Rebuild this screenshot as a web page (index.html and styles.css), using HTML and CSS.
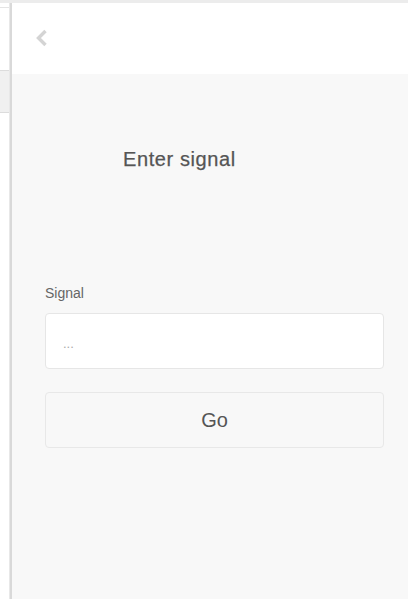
FILE: index.html
```html
<!DOCTYPE html>
<html lang="en">
<head>
<meta charset="utf-8">
<title>Enter signal</title>
<link rel="stylesheet" href="styles.css">
</head>
<body>
<div class="app">
  <aside class="side">
    <div class="side-top"></div>
    <div class="side-a"></div>
    <div class="side-b"></div>
  </aside>
  <div class="divider"></div>
  <main class="panel">
    <header class="header">
      <button class="back" aria-label="Back">
        <svg width="13" height="18" viewBox="0 0 13 18"><path d="M10.5 2 L3.5 9 L10.5 16" fill="none" stroke="#d4d4d4" stroke-width="3.4" stroke-linejoin="miter"/></svg>
      </button>
    </header>
    <section class="content">
      <h1 class="title">Enter signal</h1>
      <label class="label" for="signal">Signal</label>
      <input class="field" id="signal" type="text" placeholder="...">
      <button class="go">Go</button>
    </section>
  </main>
</div>
</body>
</html>
```

FILE: styles.css
```css
* { box-sizing: border-box; }
html, body { margin: 0; padding: 0; }
body {
  font-family: "Liberation Sans", Arial, sans-serif;
  background: #fff;
  width: 408px;
  height: 599px;
  overflow: hidden;
}
.app {
  display: flex;
  height: 599px;
  border-top: 3px solid #ececec;
}
.side {
  width: 9px;
  display: flex;
  flex-direction: column;
}
.side-top { height: 5px; border-bottom: 1px solid #e4e4e4; }
.side-a { height: 63px; border-bottom: 1px solid #dcdcdc; background: #fff; }
.side-b { height: 42px; border-bottom: 1px solid #dcdcdc; background: #f0f0f0; }
.divider {
  width: 3px;
  background: #d9d9d9;
  border-left: 1px solid #e8e8e8;
}
.panel {
  flex: 1;
  margin-top: 1px;
  background: #f8f8f8;
  border-top-left-radius: 4px;
  overflow: hidden;
  display: flex;
  flex-direction: column;
}
.header {
  height: 70px;
  background: #fff;
  padding: 25px 0 0 23px;
}
.back {
  border: 0;
  background: none;
  padding: 0;
  width: 13px;
  height: 18px;
  display: block;
}
.back svg { display: block; }
.content {
  padding: 0 24px 0 33px;
  display: flex;
  flex-direction: column;
}
.title {
  margin: 71px 0 0 78px;
  font-size: 20px;
  line-height: 28px;
  font-weight: normal;
  letter-spacing: 0.6px;
  color: #555;
  -webkit-text-stroke: 0.25px #555;
}
.label {
  margin-top: 110px;
  font-size: 14px;
  line-height: 20px;
  color: #666;
}
.field {
  margin-top: 10px;
  height: 56px;
  width: 100%;
  border: 1px solid #e6e6e6;
  border-radius: 4px;
  background: #fff;
  padding: 4px 17px 0;
  font-family: "Liberation Sans", Arial, sans-serif;
  font-size: 13px;
  color: #333;
  outline: none;
}
.field::placeholder { color: #aaa; }
.go {
  margin-top: 23px;
  height: 56px;
  width: 100%;
  border: 1px solid #e8e8e8;
  border-radius: 4px;
  background: #f8f8f8;
  font-family: "Liberation Sans", Arial, sans-serif;
  font-size: 20px;
  color: #555;
  padding: 0;
}
```
